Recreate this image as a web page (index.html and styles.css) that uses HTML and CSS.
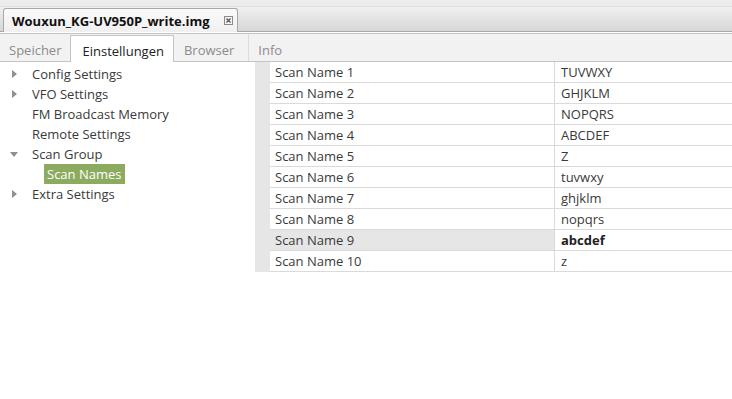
FILE: index.html
```html
<!DOCTYPE html>
<html lang="de">
<head>
    <meta charset="UTF-8">
    <title>Wouxun_KG-UV950P_write.img</title>
    <link rel="stylesheet" href="styles.css">
</head>
<body>
    <div class="file-tabs">
        <div class="file-tab">
            <span class="file-name">Wouxun_KG-UV950P_write.img</span>
            <span class="close-btn">
                <svg width="9" height="9" viewBox="0 0 9 9">
                    <rect x="0.5" y="0.5" width="8" height="8" fill="#f4f4f4" stroke="#8a8a8a"/>
                    <path d="M2.5 2.5 L6.5 6.5 M6.5 2.5 L2.5 6.5" stroke="#555" stroke-width="1.3"/>
                </svg>
            </span>
        </div>
    </div>

    <div class="page-tabs">
        <div class="page-tab">Speicher</div>
        <div class="page-tab active">Einstellungen</div>
        <div class="page-tab boxed">Browser</div>
        <div class="page-tab">Info</div>
    </div>

    <div class="main">
        <div class="tree">
            <div class="tree-row"><span class="arrow right"></span>Config Settings</div>
            <div class="tree-row"><span class="arrow right"></span>VFO Settings</div>
            <div class="tree-row"><span class="arrow"></span>FM Broadcast Memory</div>
            <div class="tree-row"><span class="arrow"></span>Remote Settings</div>
            <div class="tree-row"><span class="arrow down"></span>Scan Group</div>
            <div class="tree-row child"><span class="selected">Scan Names</span></div>
            <div class="tree-row"><span class="arrow right"></span>Extra Settings</div>
        </div>

        <div class="settings">
            <div class="row-gutter"></div>
            <div class="table" id="table"></div>
        </div>
    </div>

    <script>
        const scanNames = ["TUVWXY", "GHJKLM", "NOPQRS", "ABCDEF", "Z",
                           "tuvwxy", "ghjklm", "nopqrs", "abcdef", "z"];

        const table = document.getElementById("table");
        scanNames.forEach((value, i) => {
            const row = document.createElement("div");
            row.className = "table-row" + (i === 8 ? " current" : "");
            row.innerHTML = `<div class="cell name">Scan Name ${i + 1}</div><div class="cell value">${value}</div>`;
            table.appendChild(row);
        });
    </script>
</body>
</html>
```

FILE: styles.css
```css
body {
    margin: 0;
    width: 732px;
    height: 399px;
    overflow: hidden;
    background: #ffffff;
    font-family: "Open Sans", "Noto Sans", sans-serif;
    font-size: 12.5px;
    color: #333;
}
.file-tabs {
    height: 24px;
    padding: 7px 0 0 3px;
    background: linear-gradient(#ececec, #ececec 6px, #cfcfcf 6px, #f0f0f0 7px, #d6d6d6);
    border-bottom: 1px solid #a8a8a8;
    display: flex;
    align-items: flex-end;
}
.file-tab {
    height: 24px;
    width: 235px;
    box-sizing: border-box;
    margin-bottom: -1px;
    padding: 0 3px 0 8px;
    display: flex;
    align-items: center;
    justify-content: space-between;
    background: linear-gradient(#fafafa, #f0f0f0);
    border: 1px solid #a8a8a8;
    border-bottom: none;
    border-radius: 3px 3px 0 0;
}
.file-name {
    font-weight: bold;
    color: #111;
    font-size: 13px;
}
.close-btn {
    display: flex;
    margin-right: 1px;
}
.page-tabs {
    margin-top: 1px;
    height: 27px;
    display: flex;
    align-items: flex-end;
    background: #f2f2f2;
    border-top: 1px solid #c4c4c4;
    border-bottom: 1px solid #c4c4c4;
}
.page-tab {
    height: 27px;
    box-sizing: border-box;
    padding: 5px 9px 0;
    line-height: 22px;
    color: #8c8c8c;
    font-size: 13px;
}
.page-tab.active {
    background: #ffffff;
    color: #222;
    height: 27px;
    margin-bottom: -1px;
    border: 1px solid #c4c4c4;
    border-bottom: none;
    padding: 4px 9px 0 11px;
}
.page-tab.boxed {
    border-right: 1px solid #dcdcdc;
    padding: 5px 14px 0 10px;
}
.main {
    display: flex;
    height: 337px;
}
.tree {
    width: 255px;
    padding-top: 2px;
    color: #3a3a3a;
}
.tree-row {
    height: 20px;
    display: flex;
    align-items: center;
    padding-left: 11px;
    font-size: 13px;
}
.arrow {
    width: 21px;
    height: 9px;
    position: relative;
}
.arrow.right::before {
    content: "";
    position: absolute;
    left: 1px;
    top: 0;
    border-left: 5px solid #8f8f8f;
    border-top: 4.5px solid transparent;
    border-bottom: 4.5px solid transparent;
}
.arrow.down::before {
    content: "";
    position: absolute;
    left: -1px;
    top: 2px;
    border-top: 5px solid #8f8f8f;
    border-left: 4.5px solid transparent;
    border-right: 4.5px solid transparent;
}
.tree-row.child {
    padding-left: 44px;
}
.selected {
    background: #8cab5e;
    color: #ffffff;
    padding: 0 4px 0 3px;
    line-height: 20px;
}
.settings {
    flex: 1;
    display: flex;
    align-items: flex-start;
}
.row-gutter {
    width: 15px;
    height: 210px;
    background: #e6e6e6;
}
.table {
    flex: 1;
}
.table-row {
    display: flex;
    height: 21px;
    box-sizing: border-box;
    border-bottom: 1px solid #dadada;
}
.cell {
    line-height: 20px;
    font-size: 13px;
    color: #3a3a3a;
}
.cell.name {
    width: 279px;
    padding-left: 5px;
    border-right: 1px solid #dadada;
}
.cell.value {
    flex: 1;
    padding-left: 6px;
}
.table-row.current .name {
    background: #e6e6e6;
}
.table-row.current .value {
    font-weight: bold;
    color: #222;
}
```
